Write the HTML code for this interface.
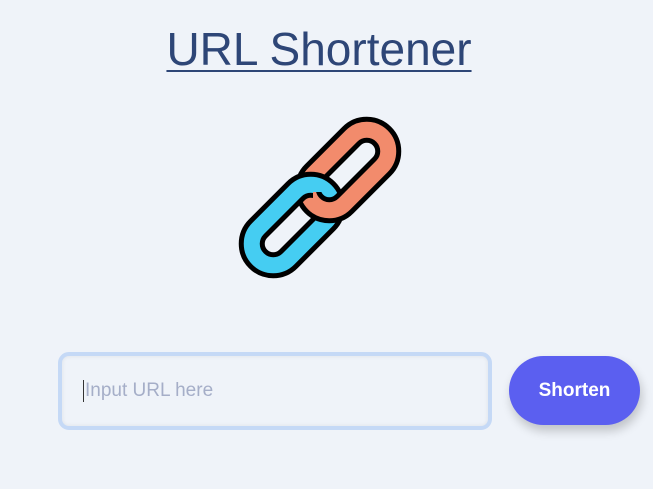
<!DOCTYPE html>
<html><head><style>
html,body{margin:0;padding:0;width:653px;height:489px;background:#eff3f9;overflow:hidden;font-family:"Liberation Sans",sans-serif}
h1{position:absolute;top:21px;left:0;width:638px;text-align:center;margin:0;font-weight:normal;font-size:46px;color:#2e4677;text-decoration:underline;text-decoration-thickness:2px;text-underline-offset:5px;line-height:56px}
.inp{position:absolute;left:58px;top:352px;width:426px;height:70px;border:4px solid #c5d9f6;border-radius:11px;box-sizing:content-box;box-shadow:inset 0 0 4px rgba(0,0,0,.08)}
.inp span{position:absolute;left:21px;top:24px;font-size:19px;color:#a5aec8;border-left:1px solid #333;padding-left:1px;line-height:22px}
.btn{position:absolute;left:509px;top:356px;width:131px;height:69px;border-radius:35px;background:#5b5ff0;color:#fff;font-weight:bold;font-size:19px;text-align:center;line-height:69px;box-shadow:2px 6px 10px rgba(0,0,0,.2)}
</style></head><body>
<h1>URL Shortener</h1>
<svg width="653" height="489" style="position:absolute;left:0;top:0">
<defs><clipPath id="c"><rect x="313" y="192" width="38" height="32"/></clipPath>
<g id="o"><g transform="translate(348,170) rotate(-45)">
<rect x="-48" y="-21.5" width="96" height="43" rx="21.5" fill="none" stroke="#000" stroke-width="26"/>
<rect x="-48" y="-21.5" width="96" height="43" rx="21.5" fill="none" stroke="#f28b6c" stroke-width="16"/>
</g></g></defs>
<use href="#o"/>
<g transform="translate(292,225) rotate(-45)">
<rect x="-48" y="-21.5" width="96" height="43" rx="21.5" fill="none" stroke="#000" stroke-width="26"/>
<rect x="-48" y="-21.5" width="96" height="43" rx="21.5" fill="none" stroke="#45cdf2" stroke-width="16"/>
</g>
<g clip-path="url(#c)"><use href="#o"/></g>
</svg>
<div class="inp"><span>Input URL here</span></div>
<div class="btn">Shorten</div>
</body></html>
